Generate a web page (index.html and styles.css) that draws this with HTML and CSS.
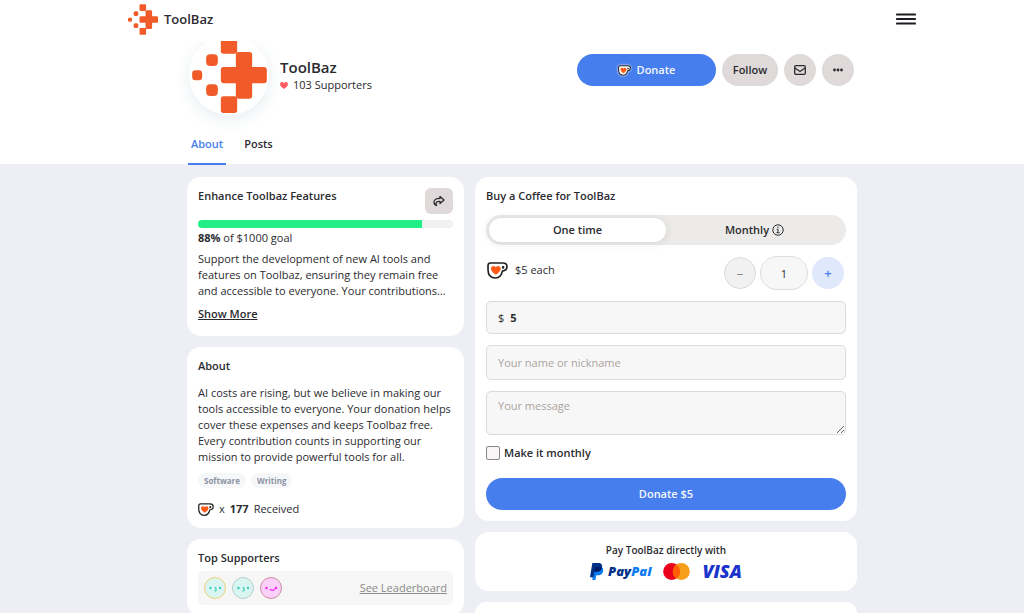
FILE: index.html
```html
<!DOCTYPE html>
<html lang="en">
  <head>
    <meta charset="UTF-8" />
    <meta name="viewport" content="width=device-width, initial-scale=1.0" />
    <title>ToolBaz</title>
    <link rel="stylesheet" href="styles.css">
  </head>
  <body>
    <svg class="sprite" aria-hidden="true">
      <symbol id="logo" viewBox="0 0 224 228">
        <g fill="#f15a29">
          <rect x="86" y="0" width="49" height="50" rx="8" />
          <rect x="131" y="45" width="49" height="140" rx="9" />
          <rect x="86" y="90" width="138" height="49" rx="9" />
          <rect x="86" y="178" width="49" height="50" rx="8" />
          <rect x="42" y="52" width="35" height="35" rx="12" />
          <rect x="0" y="100" width="30" height="30" rx="10" />
          <rect x="42" y="142" width="35" height="35" rx="12" />
        </g>
      </symbol>
      <symbol id="cup" viewBox="0 0 64 52">
        <path d="M10 3h38c9 0 13 5 13 11 0 8-5 13-14 14-3 13-10 21-21 21C10 49 3 39 3 24V11q0-8 7-8z" fill="#fff" stroke="#202020" stroke-width="5" />
        <path d="M46 12h2c3 0 5 1 5 4s-2 5-5 5h-2z" fill="#202020" />
        <path d="M27 39C20 34 12 29 12 21c0-9 10-11 15-5 5-6 15-4 15 5 0 8-8 13-15 18z" fill="#ff5a16" />
      </symbol>
    </svg>

    <header class="navbar">
      <div class="nav-inner">
        <a class="brand" href="#">
          <svg class="brand-logo"><use href="#logo" /></svg>
          ToolBaz
        </a>
        <button class="menu-btn" aria-label="Menu">
          <svg width="20" height="12" viewBox="0 0 20 12" stroke="#1c1c22" stroke-width="2.200" stroke-linecap="round">
            <path d="M1 1.500h18M1 6h18M1 10.500h18" />
          </svg>
        </button>
      </div>
    </header>

    <section class="profile">
      <div class="container">
        <div class="profile-head">
          <div class="avatar">
            <svg class="avatar-logo"><use href="#logo" /></svg>
          </div>
          <div class="profile-info">
            <h1>ToolBaz</h1>
            <div class="supporters">
              <svg width="8" height="7" viewBox="0 0 18 16"><path d="M9 16C4 12 0 9 0 5 0 0 6-2 9 3c3-5 9-3 9 2 0 4-4 7-9 11z" fill="#ff5b62" /></svg>
              103 Supporters
            </div>
          </div>
          <div class="actions">
            <button class="btn btn-primary btn-donate">
              <svg class="halo" width="13" height="11"><use href="#cup" /></svg>
              Donate
            </button>
            <button class="btn btn-grey btn-follow">Follow</button>
            <button class="btn btn-grey btn-round" aria-label="Message">
              <svg width="12" height="10" viewBox="0 0 12 10" fill="none" stroke="#2b2b2f" stroke-width="1.300">
                <rect x="0.700" y="0.700" width="10.600" height="8.600" rx="1.200" />
                <path d="M1 3l5 3.500L11 3" />
              </svg>
            </button>
            <button class="btn btn-grey btn-round" aria-label="More">
              <svg width="10" height="4" viewBox="0 0 10 4" fill="#2b2b2f">
                <circle cx="1.500" cy="2" r="1.400" />
                <circle cx="5" cy="2" r="1.400" />
                <circle cx="8.500" cy="2" r="1.400" />
              </svg>
            </button>
          </div>
        </div>
        <nav class="tabs">
          <a class="tab active" href="#about">About</a>
          <a class="tab" href="#posts">Posts</a>
        </nav>
      </div>
    </section>

    <main class="container columns">
      <div class="column">
        <section class="card goal">
          <div class="goal-head">
            <h2>Enhance Toolbaz Features</h2>
            <button class="share-btn" aria-label="Share">
              <svg width="12" height="12" viewBox="0 0 24 24" fill="none" stroke="#2b2b2f" stroke-width="2.600" stroke-linejoin="round">
                <path d="M14 3l8 7-8 7v-4c-5-.5-8 1-8 4 0 2 1 3 1 4-4-1-5-4-5-7 0-5 5-7.500 12-7z" />
              </svg>
            </button>
          </div>
          <div class="progress"><div class="progress-bar" style="width: 88%"></div></div>
          <p class="goal-amount"><b>88%</b> of $1000 goal</p>
          <p class="goal-text">Support the development of new AI tools and features on Toolbaz, ensuring they remain free and accessible to everyone. Your contributions…</p>
          <a class="show-more" href="#">Show More</a>
        </section>

        <section class="card" id="about">
          <h2>About</h2>
          <p class="about-text">AI costs are rising, but we believe in making our tools accessible to everyone. Your donation helps cover these expenses and keeps Toolbaz free. Every contribution counts in supporting our mission to provide powerful tools for all.</p>
          <div class="tags">
            <a class="tag" href="#">Software</a>
            <a class="tag" href="#">Writing</a>
          </div>
          <div class="received">
            <svg width="16" height="13"><use href="#cup" /></svg>
            <span>x</span><b>177</b><span>Received</span>
          </div>
        </section>

        <section class="card">
          <h2>Top Supporters</h2>
          <div class="leaders">
            <svg class="face gold" viewBox="0 0 22 22">
              <g fill="#35cdb8"><circle cx="6" cy="11" r="1.300" /><circle cx="16.500" cy="11" r="1.300" /></g>
              <path d="M10.500 10.500c2 0 2 1.500 1 1.800 1.500.3 1 2-1 1.800" fill="none" stroke="#35cdb8" stroke-width="1.200" />
            </svg>
            <svg class="face silver" viewBox="0 0 22 22">
              <g fill="#35cdb8"><circle cx="6" cy="11" r="1.300" /><circle cx="16.500" cy="11" r="1.300" /></g>
              <path d="M10.500 10.500c2 0 2 1.500 1 1.800 1.500.3 1 2-1 1.800" fill="none" stroke="#35cdb8" stroke-width="1.200" />
            </svg>
            <svg class="face bronze" viewBox="0 0 22 22">
              <g fill="#ee22ee"><circle cx="6" cy="11" r="1.300" /><circle cx="16.500" cy="11" r="1.300" /></g>
              <path d="M10 12c.5 2 4.500 2 5 0" fill="none" stroke="#ee22ee" stroke-width="1.400" />
            </svg>
            <a class="leaderboard" href="#">See Leaderboard</a>
          </div>
        </section>
      </div>

      <div class="column">
        <form class="card donate-form">
          <h2>Buy a Coffee for ToolBaz</h2>
          <div class="switch">
            <button type="button" class="switch-btn selected">One time</button>
            <button type="button" class="switch-btn">
              Monthly
              <svg width="12" height="12" viewBox="0 0 12 12" fill="none" stroke="#2b2b2f">
                <circle cx="6" cy="6" r="5.200" />
                <path d="M6 2.700v1.300M4.700 5.300H6v3.200M4.500 8.700h3" />
              </svg>
            </button>
          </div>
          <div class="quantity">
            <div class="price">
              <svg width="21" height="17"><use href="#cup" /></svg>
              $5 each
            </div>
            <button type="button" class="step minus" aria-label="Remove one">–</button>
            <input class="count" type="text" value="1" aria-label="Quantity" />
            <button type="button" class="step plus" aria-label="Add one">+</button>
          </div>
          <div class="field amount">
            <label for="amount">$</label>
            <input id="amount" type="text" value="5" />
          </div>
          <input class="field name" type="text" placeholder="Your name or nickname" aria-label="Your name or nickname" />
          <textarea class="field message" placeholder="Your message" aria-label="Your message"></textarea>
          <label class="monthly"><input type="checkbox" /> Make it monthly</label>
          <button type="button" class="btn btn-primary">Donate $5</button>
        </form>

        <section class="card pay">
          <h3>Pay ToolBaz directly with</h3>
          <div class="pay-logos">
            <div class="paypal">
              <svg width="14" height="17" viewBox="0 0 42 51">
                <path d="M11 13h20c8 0 10 6 8 13-2 8-8 11-16 11h-4l-3 14H7z" fill="#0a7cf0" />
                <path d="M7 0h18c9 0 13 6 11 14-2 9-9 12-17 12h-6l-3 17H0z" fill="#003087" />
                <path d="M15 13h21c-2 9-9 13-17 13h-6z" fill="#001c64" />
              </svg>
              <span>Pay<em>Pal</em></span>
            </div>
            <svg width="27" height="17" viewBox="0 0 81 51" role="img" aria-label="Mastercard">
              <circle cx="26" cy="25.500" r="25.500" fill="#eb001b" />
              <circle cx="55" cy="25.500" r="25.500" fill="#f79e1b" />
              <path d="M40.500 4.500a25.500 25.500 0 0 1 0 42 25.500 25.500 0 0 1 0-42z" fill="#ff5f00" />
            </svg>
            <span class="visa">VISA</span>
          </div>
        </section>

        <section class="card"></section>
      </div>
    </main>
  </body>
</html>
```

FILE: styles.css
```css
* {
  box-sizing: border-box;
}

body {
  margin: 0;
  padding-left: 20px;
  background: linear-gradient(#fff 0 164px, #eeeff5 164px);
  font-family: "Open Sans", sans-serif;
  font-size: 11px;
  line-height: 16px;
  color: #2b2b2f;
  height: 100vh;
  overflow: hidden;
}

h1,
h2,
h3,
p {
  margin: 0;
}

h2 {
  font-size: 11px;
  font-weight: 600;
  line-height: 16px;
}

b {
  font-weight: 700;
}

a {
  color: inherit;
}

button,
input,
textarea {
  font: inherit;
  color: inherit;
}

button {
  border: none;
  padding: 0;
  cursor: pointer;
}

svg {
  flex: none;
}

.sprite {
  display: none;
}

.navbar {
  position: sticky;
  top: 0;
  z-index: 2;
  background: #fff;
}

.nav-inner {
  display: flex;
  justify-content: space-between;
  align-items: center;
  max-width: 788px;
  height: 41px;
  margin: 0 auto;
  padding-bottom: 3px;
}

.brand {
  display: flex;
  align-items: center;
  gap: 6px;
  font-size: 13px;
  font-weight: 600;
  text-decoration: none;
}

.brand-logo {
  width: 30px;
  height: 31px;
}

.menu-btn {
  display: flex;
  background: none;
}

.container {
  max-width: 670px;
  margin: 0 auto;
}

.profile {
  margin-top: -6px;
}

.profile-head {
  display: flex;
  align-items: center;
  padding: 0 3px 0 2px;
}

.avatar {
  display: flex;
  align-items: center;
  justify-content: center;
  width: 80px;
  height: 80px;
  border-radius: 50%;
  box-shadow: 0 4px 16px rgba(60, 110, 130, 0.12);
}

.avatar-logo {
  width: 75px;
  height: 76px;
}

.profile-info {
  margin-left: 11px;
}

.profile-info h1 {
  font-size: 15px;
  font-weight: 600;
  line-height: 20px;
}

.supporters {
  display: flex;
  align-items: center;
  gap: 5px;
}

.actions {
  display: flex;
  gap: 6px;
  margin-left: auto;
  padding-bottom: 10px;
}

.btn {
  display: flex;
  align-items: center;
  justify-content: center;
  gap: 6px;
  height: 32px;
  border-radius: 16px;
  font-weight: 600;
}

.btn-primary {
  background: #477eed;
  color: #f4f7ff;
}

.btn-donate {
  width: 139px;
}

.halo {
  filter: drop-shadow(0 0 1px #fff);
}

.btn-grey {
  background: #dfd9d9;
}

.btn-follow {
  width: 56px;
}

.btn-round {
  width: 32px;
}

.tabs {
  display: flex;
  gap: 15px;
  padding: 16px 1px 0;
}

.tab {
  padding: 5px 3px 11px;
  border-bottom: 2px solid transparent;
  font-weight: 600;
  text-decoration: none;
}

.tab.active {
  color: #477eed;
  border-color: #477eed;
}

.columns {
  display: grid;
  grid-template-columns: 277fr 382fr;
  gap: 11px;
  padding-top: 12px;
}

.column {
  display: flex;
  flex-direction: column;
  gap: 11px;
}

.card {
  padding: 11px;
  background: #fff;
  border-radius: 14px;
}

.goal {
  padding-bottom: 14px;
}

.goal-head {
  display: flex;
  justify-content: space-between;
}

.share-btn {
  display: flex;
  align-items: center;
  justify-content: center;
  width: 28px;
  height: 26px;
  background: #dfd9d9;
  border-radius: 6px;
}

.progress {
  height: 8px;
  margin-top: 6px;
  background: #f1f1f1;
  border-radius: 4px;
  overflow: hidden;
}

.progress-bar {
  height: 100%;
  background: #22ee88;
}

.goal-amount {
  margin-top: 2px;
}

.goal-text {
  margin-top: 5px;
}

.show-more {
  display: inline-block;
  margin-top: 7px;
  font-weight: 600;
}

.about-text {
  margin-top: 11px;
}

.tags {
  display: flex;
  gap: 5px;
  margin-top: 8px;
}

.tag {
  padding: 0 6px;
  background: #f6f7f9;
  border-radius: 8px;
  color: #8c92a3;
  font-size: 8px;
  font-weight: 700;
  line-height: 15px;
  text-decoration: none;
}

.received {
  display: flex;
  align-items: center;
  gap: 5px;
  margin-top: 13px;
}

.leaders {
  display: flex;
  align-items: center;
  gap: 6px;
  margin-top: 5px;
  padding: 6px;
  background: #f6f6f6;
  border-radius: 5px;
}

.face {
  width: 22px;
  height: 22px;
  border: 1px solid;
  border-radius: 50%;
  background: #d8f5f1;
}

.gold {
  border-color: #f3cf76;
}

.silver {
  border-color: #b9cfcc;
}

.bronze {
  border-color: #cf8a9e;
  background: #fbd0fb;
}

.leaderboard {
  margin-left: auto;
  color: #8a8a8a;
}

.donate-form {
  display: flex;
  flex-direction: column;
  gap: 11px;
}

.switch {
  display: flex;
  height: 30px;
  padding: 3px;
  background: #ecebe9;
  border-radius: 15px;
}

.switch-btn {
  display: flex;
  flex: 1;
  align-items: center;
  justify-content: center;
  gap: 3px;
  background: none;
  border-radius: 12px;
  font-weight: 600;
}

.switch-btn.selected {
  background: #fff;
  box-shadow: 0 1px 10px rgba(0, 0, 0, 0.1);
}

.quantity {
  display: flex;
  align-items: center;
  gap: 4px;
  padding-right: 2px;
}

.price {
  display: flex;
  align-items: center;
  gap: 7px;
  margin-right: auto;
  padding: 0 1px 6px;
}

.step {
  width: 32px;
  height: 32px;
  border-radius: 50%;
  font-size: 13px;
}

.minus {
  background: #f1f1f1;
  border: 1px solid #dcdcdc;
  color: #8a8a8a;
}

.plus {
  background: #e0e8fc;
  color: #477eed;
  font-weight: 600;
}

.count {
  width: 48px;
  height: 34px;
  background: #f7f7f7;
  border: 1px solid #dedcdc;
  border-radius: 17px;
  text-align: center;
}

.field {
  width: 100%;
  height: 35px;
  padding: 0 11px;
  background: #f7f7f7;
  border: 1px solid #dcdada;
  border-radius: 5px;
}

.field::placeholder {
  color: #aba3a0;
}

.amount {
  display: flex;
  align-items: center;
  gap: 6px;
  height: 33px;
}

.amount input {
  flex: 1;
  min-width: 0;
  padding: 0;
  background: none;
  border: none;
  font-weight: 700;
}

.message {
  display: block;
  height: 44px;
  padding-top: 6px;
}

.monthly {
  display: flex;
  align-items: center;
  gap: 4px;
  height: 14px;
  margin-bottom: 7px;
  font-weight: 600;
}

.monthly input {
  appearance: none;
  width: 14px;
  height: 14px;
  margin: 0;
  background: #f7f5f5;
  border: 1px solid #8f8785;
  border-radius: 2px;
}

.monthly input:checked {
  background: #477eed;
}

.pay {
  text-align: center;
}

.pay h3 {
  font-size: 10px;
  font-weight: 600;
  line-height: 14px;
}

.pay-logos {
  display: flex;
  align-items: center;
  justify-content: center;
  gap: 12px;
  height: 18px;
  margin-top: 5px;
}

.paypal {
  display: flex;
  align-items: center;
  gap: 4px;
  color: #003087;
  font-size: 13px;
  font-style: italic;
  font-weight: 800;
}

.paypal em {
  color: #0a7cf0;
}

.visa {
  color: #1a34cc;
  font-size: 18px;
  font-style: italic;
  font-weight: 800;
}
```
